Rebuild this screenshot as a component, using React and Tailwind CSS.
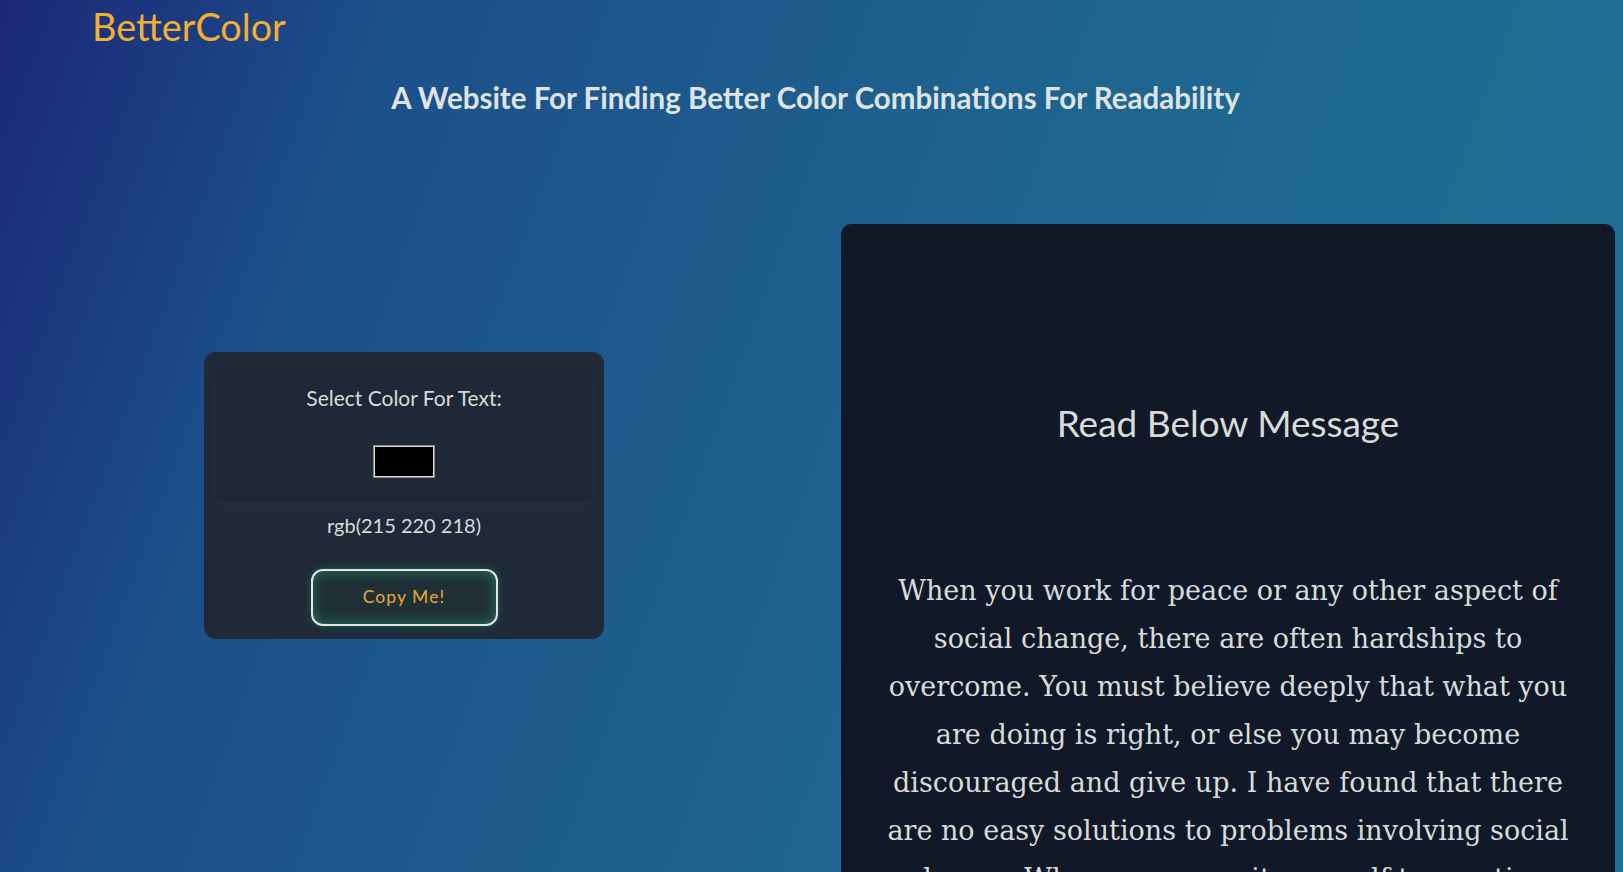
import React from "react"

const paragraphLines = [
  "When you work for peace or any other aspect of",
  "social change, there are often hardships to",
  "overcome. You must believe deeply that what you",
  "are doing is right, or else you may become",
  "discouraged and give up. I have found that there",
  "are no easy solutions to problems involving social",
  "change. When you commit yourself to creating",
  "change, you must be prepared for a long struggle.",
]

const ColorPicker = ({ label, color, value }) => {
  return (
    <div className="w-[400px] rounded-xl bg-[#1f2937] p-3 pb-[13px] flex flex-col items-center">
      <div className="w-full h-[138px] rounded-xl bg-[#1e2836] shadow-[0_6px_14px_rgba(255,255,255,0.035)] flex flex-col items-center pt-[22px]">
        <p className="text-[21px] leading-[24px]">{ label }</p>
        <div className="mt-[35px] w-[62px] h-[33px] border border-[#858585] bg-[#dcdcdc] p-px">
          <div className="w-full h-full" style={{ backgroundColor: color }} />
        </div>
      </div>
      <p className="mt-[11px] text-[20px] leading-[24px]">{ value }</p>
      <button
        className="mt-[32px] w-[187px] h-[57px] rounded-[12px] border-2 border-[#e3e6e4] bg-[#1f2f36] text-[17.5px] tracking-[0.06em] text-[#efa82f] shadow-[inset_0_0_14px_rgba(45,190,140,0.5),0_0_9px_rgba(45,190,140,0.35)]"
      >
        Copy Me!
      </button>
    </div>
  )
}

const App = () => {
  return (
    <div className="h-screen w-full overflow-hidden bg-[linear-gradient(110deg,#1b2878_0%,#1c4f8a_20%,#1e6590_58%,#1f7296_100%)] font-['Lato',sans-serif] text-[#d7dcda]">
      <header className="pl-[92px] pt-[4px]">
        <h1 className="text-[37.8px] leading-[46px] text-[#f3b030]">BetterColor</h1>
      </header>

      <h2 className="mt-[30px] pl-[8px] text-center text-[29.5px] leading-[36px] font-bold text-[#dfe3e5]">
        A Website For Finding Better Color Combinations For Readability
      </h2>

      <main className="mt-[108px] flex items-start">
        <section className="w-[808px] flex justify-center pt-[128px]">
          <ColorPicker
            label="Select Color For Text:"
            color="#000000"
            value="rgb(215 220 218)"
          />
        </section>

        <section className="ml-[33px] w-[774px] rounded-[10px] bg-[#111827] pt-[175px] pb-10 text-center">
          <h3 className="text-[37px] leading-[48px]">Read Below Message</h3>
          <p className="mt-[120px] font-['DejaVu_Serif',serif] text-[27px] leading-[48px]">
            { paragraphLines.map((line, i) => (
              <span key={i} className="block">{ line }</span>
            ))}
          </p>
        </section>
      </main>
    </div>
  )
}

export default App
